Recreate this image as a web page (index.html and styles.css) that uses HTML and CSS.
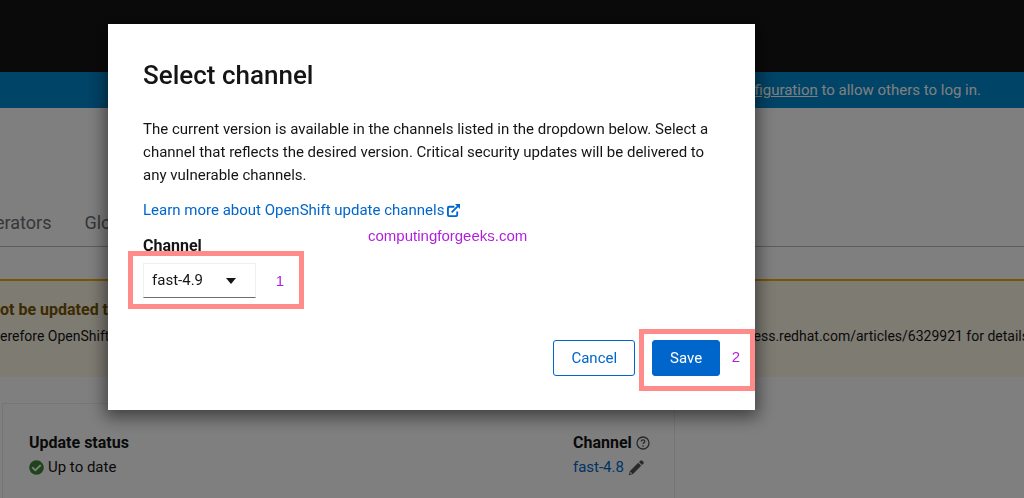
FILE: index.html
```html
<!DOCTYPE html>
<html lang="en">
  <head>
    <meta charset="UTF-8" />
    <meta name="viewport" content="width=device-width, initial-scale=1.0" />
    <title>Cluster Settings</title>
    <link rel="stylesheet" href="styles.css" />
  </head>
  <body>
    <div class="page">
      <header class="masthead"></header>
      <div class="banner">
        <p><a href="#">figuration</a> to allow others to log in.</p>
      </div>

      <nav class="tabs">
        <a href="#">erators</a>
        <a href="#">Glo</a>
      </nav>

      <main class="content">
        <div class="alert">
          <h4>ot be updated t</h4>
          <div class="alert-text">
            <span>erefore OpenShift</span>
            <span class="alert-end">cess.redhat.com/articles/6329921 for details</span>
          </div>
        </div>

        <section class="card">
          <dl>
            <dt>Update status</dt>
            <dd>
              <svg class="icon-check" viewBox="0 0 512 512">
                <path d="M504 256c0 137-111 248-248 248S8 393 8 256 119 8 256 8s248 111 248 248zM227 387l184-184c6-6 6-16 0-23l-22-22c-7-7-17-7-23 0L216 308l-70-70c-6-6-16-6-23 0l-22 22c-7 7-7 17 0 23l104 104c6 6 16 6 22 0z" />
              </svg>
              Up to date
            </dd>
          </dl>
          <dl>
            <dt>
              Channel
              <svg class="icon-help" viewBox="0 0 14 14">
                <circle cx="7" cy="7" r="6" />
                <path d="M5.200 5.500c.1-2.200 3.600-2.100 3.600-.1 0 1.300-1.800 1.300-1.800 2.700" />
                <path d="M7 9.300v1.400" />
              </svg>
            </dt>
            <dd>
              <a href="#">fast-4.8</a>
              <svg class="icon-pencil" viewBox="0 0 16 16">
                <path d="M11 2l1.300-1.300q1-1 2 0l1 1q1 1 0 2L14 5z" />
                <path d="M10.200 2.800l3 3L5 14l-4.300 1.300L2 11zM2.700 11.800l-.7 2.200 2.200-.7z" fill-rule="evenodd" />
              </svg>
            </dd>
          </dl>
        </section>
      </main>
    </div>

    <div class="backdrop">
      <form class="modal">
        <h1>Select channel</h1>
        <p>
          The current version is available in the channels listed in the dropdown below. Select a
          channel that reflects the desired version. Critical security updates will be delivered to
          any vulnerable channels.
        </p>
        <a class="learn-more" href="#">
          Learn more about OpenShift update channels
          <svg class="icon-external" viewBox="0 0 14 14">
            <path class="box" d="M8 3H2.200Q1 3 1 4.200v7.600Q1 13 2.200 13h7.600Q11 13 11 11.800V8" />
            <path class="box" d="M5 9l6.500-6.500" />
            <path class="head" d="M8.500 0H14v5.500z" />
          </svg>
        </a>
        <label for="channel">Channel</label>
        <div class="select">
          <select id="channel">
            <option>fast-4.9</option>
          </select>
          <svg class="caret" viewBox="0 0 10 6"><path d="M0 0h10L5 6z" /></svg>
        </div>
        <footer>
          <button type="button" class="btn">Cancel</button>
          <button type="submit" class="btn btn-primary">Save</button>
        </footer>

        <!-- Notes drawn over the dialog -->
        <span class="watermark">computingforgeeks.com</span>
        <span class="mark mark-channel">1</span>
        <span class="mark mark-save">2</span>
      </form>
    </div>
  </body>
</html>
```
FILE: styles.css
```css
* {
  box-sizing: border-box;
}
body {
  margin: 0;
  font-family: Roboto, sans-serif;
  font-size: 15px;
  line-height: 23px;
  color: #151515;
  background-color: #fff;
}
h1,
h4,
p,
dl,
dd {
  margin: 0;
}
a {
  color: #0066cc;
  text-decoration: none;
}
.page {
  height: 100vh;
  overflow: hidden;
}
.masthead {
  height: 72px;
  background-color: #151515;
}
.banner {
  display: flex;
  justify-content: flex-end;
  padding: 7px 43px 6px;
  color: #fff;
  background-color: #0088ce;
}
.banner a {
  color: #fff;
  text-decoration: underline;
}
.tabs {
  display: flex;
  gap: 33px;
  margin-left: -5px;
  padding: 102px 0 11px;
  border-bottom: 1px solid #b8bbbe;
}
.tabs a {
  color: #6a6e73;
  font-size: 18px;
  line-height: 25px;
}
.content {
  padding-top: 32px;
}
.alert {
  height: 98px;
  padding-top: 17px;
  border-top: 2px solid #f0ab00;
  background-color: #fdf7e7;
}
.alert h4 {
  color: #795600;
  font-size: 16px;
}
.alert-text {
  display: flex;
  justify-content: space-between;
  margin-right: -5px;
  padding-top: 4px;
  font-size: 14px;
  white-space: nowrap;
}
.card {
  display: flex;
  justify-content: space-between;
  width: 65.7%;
  height: 140px;
  margin: 26px 0 0 2px;
  padding: 26px 24px 0 26px;
  border: 1px solid #ececec;
}
dt {
  font-size: 16px;
  font-weight: 700;
}
dt,
dd {
  display: flex;
  align-items: center;
  gap: 4px;
  line-height: 25px;
}
.icon-check {
  width: 15px;
  height: 15px;
  fill: #3e8635;
}
.icon-help {
  width: 14px;
  height: 14px;
  fill: none;
  stroke: #4f5255;
  stroke-width: 1.3;
}
.icon-pencil {
  width: 16px;
  height: 16px;
  fill: #4f5255;
}
.backdrop {
  position: fixed;
  inset: 0;
  padding: 24px 26.25% 0 10.55%;
  background-color: rgba(0, 0, 0, 0.5);
}
.modal {
  position: relative;
  display: flex;
  flex-direction: column;
  align-items: flex-start;
  padding: 34px 35px;
  background-color: #fff;
  box-shadow: 0 4px 16px 3px rgba(0, 0, 0, 0.5);
}
.modal h1 {
  margin-bottom: 26px;
  font-size: 26px;
  font-weight: 500;
  line-height: 34px;
}
.learn-more {
  display: flex;
  align-items: center;
  gap: 3px;
  margin: 12px 0;
}
.icon-external {
  width: 13px;
  height: 13px;
}
.icon-external .box {
  fill: none;
  stroke: #0066cc;
  stroke-width: 2;
}
.icon-external .head {
  fill: #0066cc;
}
.modal label {
  font-size: 16px;
  font-weight: 700;
}
.select {
  position: relative;
  margin-top: 6px;
}
.select select {
  display: block;
  width: 113px;
  height: 35px;
  padding: 0 8px;
  border: 1px solid #f0f0f0;
  border-bottom-color: #6a6e73;
  border-radius: 0;
  background-color: #fff;
  color: #151515;
  font: inherit;
  appearance: none;
}
.caret {
  position: absolute;
  top: 15px;
  right: 20px;
  width: 10px;
  height: 6px;
  fill: #151515;
}
.modal footer {
  display: flex;
  align-self: flex-end;
  gap: 17px;
  margin-top: 42px;
}
.btn {
  height: 36px;
  padding: 0 17px;
  border: 1px solid #0066cc;
  border-radius: 3px;
  background-color: #fff;
  color: #0066cc;
  font: inherit;
}
.btn-primary {
  background-color: #0066cc;
  color: #fff;
}
.watermark,
.mark {
  position: absolute;
  color: #b01fdb;
  font-family: "Liberation Sans", Arial, sans-serif;
}
.watermark {
  top: 200px;
  left: 260px;
}
.mark {
  display: flex;
  align-items: center;
  justify-content: flex-end;
  border: 5px solid #ff8b8b;
}
.mark-channel {
  top: 227px;
  left: 20px;
  width: 176px;
  height: 58px;
  padding-right: 15px;
}
.mark-save {
  right: 0;
  bottom: 19px;
  width: 116px;
  height: 62px;
  padding: 0 10px 8px 0;
}
```
